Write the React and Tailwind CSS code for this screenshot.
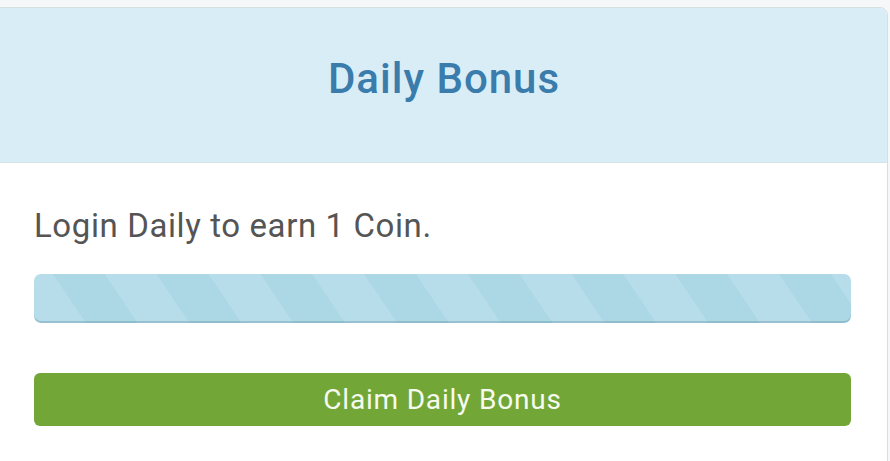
export default function App() {
  return (
    <div className="h-[461px] w-[890px] overflow-hidden bg-[#f5f7f9] pt-[7px] font-['Roboto',sans-serif]">
      <div className="ml-[-10px] w-[898px] h-[460px] rounded-tr-[8px] border border-[#d3dfe0] bg-white">
        {/* Heading */}
        <div className="h-[155px] rounded-tr-[7px] border-b border-[#d5e2e6] bg-[#d9edf7] pl-[10px] pt-[50px]">
          <h3 className="text-center text-[42px] leading-none font-medium tracking-[1px] text-[#3a7cab]">
            Daily Bonus
          </h3>
        </div>

        {/* Body */}
        <div className="pl-[43px] pr-[36px] pt-[44px]">
          <p className="text-[33px] leading-[38px] tracking-[0.6px] text-[#555]">Login Daily to earn 1 Coin.</p>

          <div className="mt-[29px] h-[49px] rounded-[7px] bg-[#acd8e6] bg-[repeating-linear-gradient(56deg,#b7ddea_0px,#b7ddea_43px,#acd7e5_43px,#acd7e5_86px)] shadow-[inset_0_-2px_0_rgba(80,130,150,0.3)]" />

          <button className="mt-[50px] flex h-[53px] w-full items-center justify-center rounded-[6px] bg-[#72a738] text-[28px] tracking-[0.8px] text-[#f7fbef]">
            Claim Daily Bonus
          </button>
        </div>
      </div>
    </div>
  )
}
